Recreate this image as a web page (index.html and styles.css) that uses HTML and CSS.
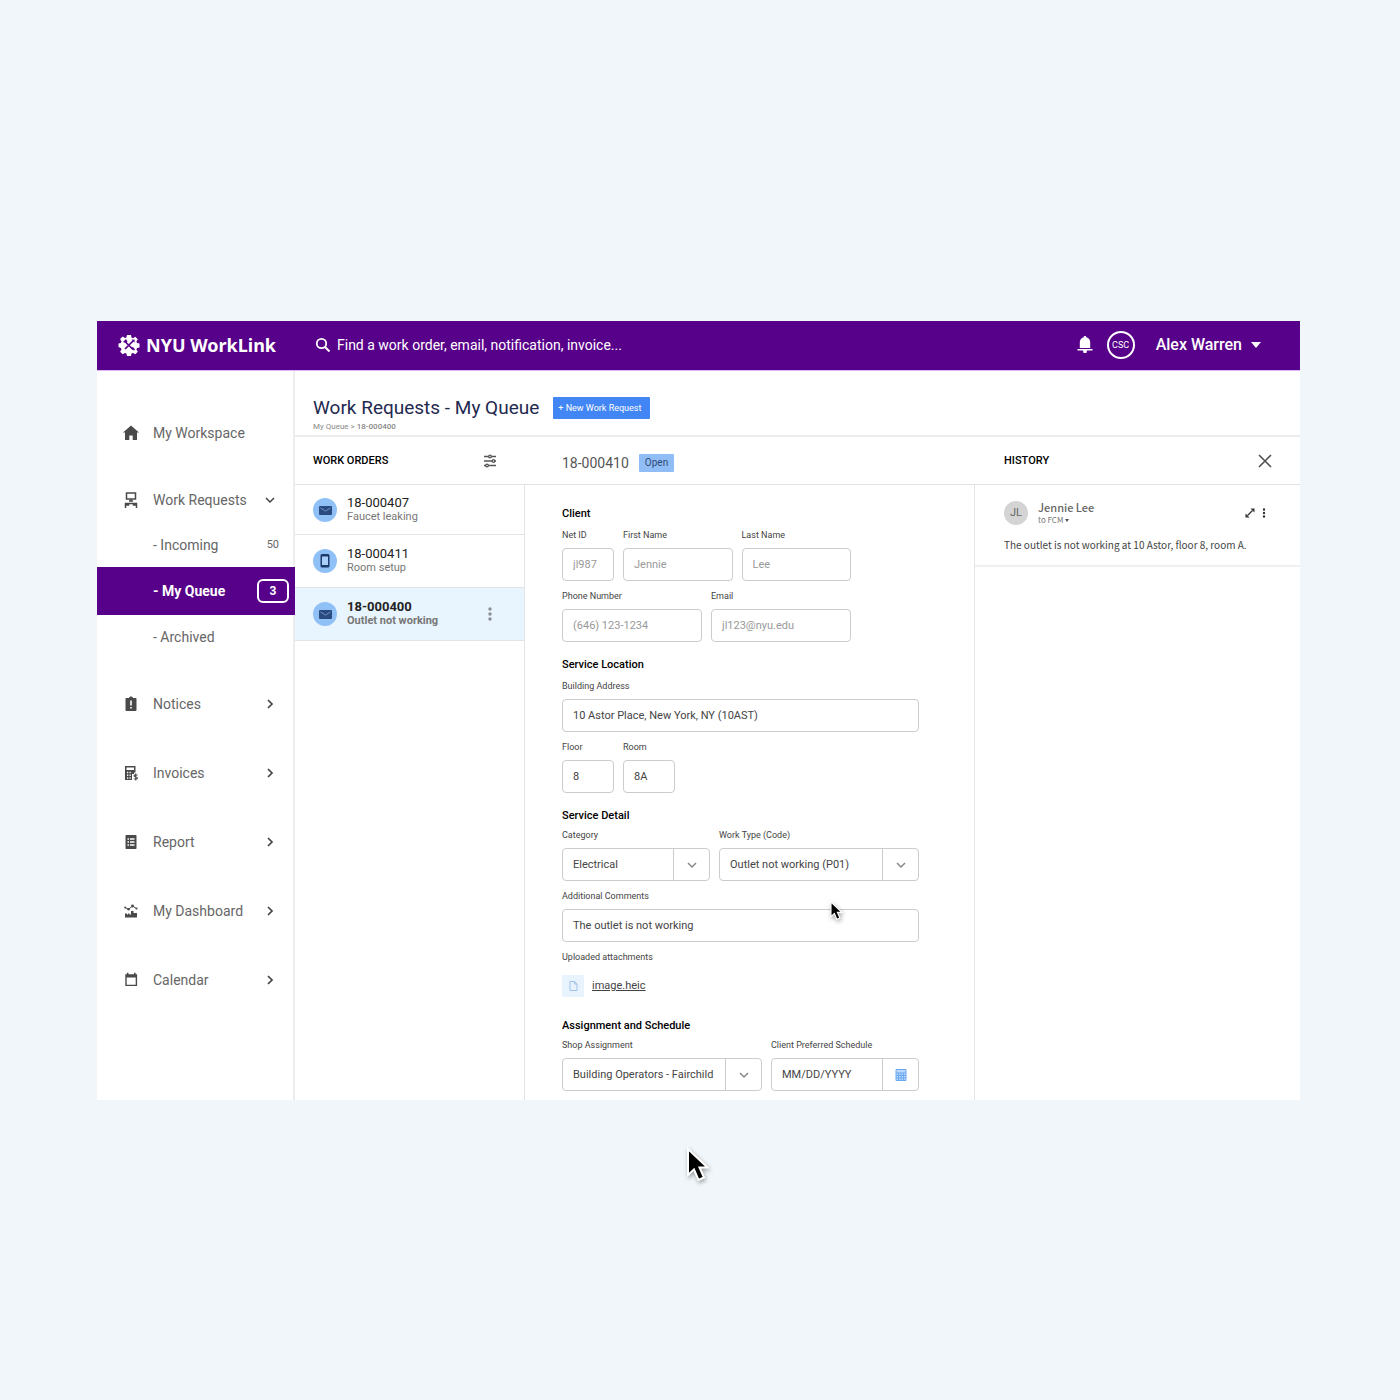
FILE: index.html
```html
<!DOCTYPE html>
<html lang="en">
<head>
<meta charset="utf-8">
<title>NYU WorkLink</title>
<link rel="stylesheet" href="styles.css">
</head>
<body>
<svg class="sprite" aria-hidden="true">
  <symbol id="pointer" viewBox="0 0 24 36">
    <path d="M3 2v26l6-5.500 4.500 10.500 5.500-2.500-4.500-10h8z" fill="#000" stroke="#fff" stroke-width="2"/>
  </symbol>
  <symbol id="right" viewBox="0 0 10 10"><path d="M3 1l4 4-4 4" fill="none" stroke="currentColor" stroke-width="1.700"/></symbol>
  <symbol id="down" viewBox="0 0 10 10"><path d="M1 3l4 4 4-4" fill="none" stroke="currentColor" stroke-width="1.500"/></symbol>
  <symbol id="mail" viewBox="0 0 24 24">
    <circle cx="12" cy="12" r="12" fill="#90c1f6"/>
    <rect x="6" y="8" width="13" height="9" rx="1" fill="#2b4a7f"/>
    <path d="M7.500 10l5 3 5-3" fill="none" stroke="#7ba6dc" stroke-width=".8"/>
  </symbol>
  <symbol id="phone" viewBox="0 0 24 24">
    <circle cx="12" cy="12" r="12" fill="#90c1f6"/>
    <rect x="7.500" y="5" width="9" height="13.500" rx="1.500" fill="#1d3a6d"/>
    <rect x="9" y="7.500" width="6" height="8.500" fill="#a9d0f9"/>
  </symbol>
  <symbol id="dots" viewBox="0 0 4 14"><circle cx="2" cy="2" r="1.700"/><circle cx="2" cy="7" r="1.700"/><circle cx="2" cy="12" r="1.700"/></symbol>
</svg>

<div class="app">
  <header class="topbar">
    <a class="brand" href="#">
      <svg width="22" height="22" viewBox="0 0 22 22">
        <path d="M9 1h4l.5 2.600 1.500.6 2.300-1.500 2.500 2.600-1.400 2.300.6 1.500 2.500.5v3.800l-2.500.6-.6 1.500 1.400 2.300-2.500 2.500-2.300-1.400-1.500.6-.5 2.500H9l-.6-2.500-1.500-.6-2.200 1.400-2.600-2.500 1.400-2.300-.6-1.500L.5 13V9.400l2.400-.5.6-1.500-1.400-2.300 2.600-2.600 2.200 1.500 1.500-.6z" fill="#fff"/>
        <path d="M7 7.500l8 8M15.500 6.500L7 15" stroke="#570089" stroke-width="1.700" fill="none"/>
        <path d="M5 8l3-3 1.500 2.500L8 9zM13.500 13l2 .5 1.500 2-1 1-2-1.500zM13.500 5.500l3 .2.300 3" fill="#570089"/>
      </svg>
      <span>NYU WorkLink</span>
    </a>
    <label class="search">
      <svg width="16" height="16" viewBox="0 0 16 16"><circle cx="6.500" cy="6.500" r="4.700" fill="none" stroke="#fff" stroke-width="1.800"/><path d="M10 10l4.500 4.500" stroke="#fff" stroke-width="2"/></svg>
      <input type="search" aria-label="Search" placeholder="Find a work order, email, notification, invoice...">
    </label>
    <button class="bell" aria-label="Notifications">
      <svg width="16" height="18" viewBox="0 0 16 18" fill="#fff"><path d="M8 0c.8 0 1.300.5 1.300 1.300C12 2 13.200 4 13.200 6.500V12H2.800V6.500C2.800 4 4 2 6.700 1.300 6.700.5 7.200 0 8 0zM.5 13h15v1.600H10L9.500 17h-3L6 14.600H.5z"/></svg>
    </button>
    <span class="role">CSC</span>
    <button class="user">Alex Warren <svg width="10" height="6" viewBox="0 0 10 6"><path d="M0 0h10L5 6z" fill="#fff"/></svg></button>
  </header>

  <div class="body">
    <nav class="sidebar">
      <a class="nav-item" href="#">
        <svg class="icon" viewBox="0 0 16 16"><path d="M8 .5l8 7h-2V15H9.700v-4.500H6.300V15H2V7.500H0z"/></svg>
        <span>My Workspace</span>
      </a>
      <div class="nav-group">
        <a class="nav-item" href="#">
          <svg class="icon" viewBox="0 0 16 16" fill="none" stroke="currentColor" stroke-width="1.500"><path d="M3.500 1h9v6h-9zM8 7v2.500M6 9h4M2.500 16v-4.500h11V16M2.500 13h3v-2M13.500 13h-3v-2"/></svg>
          <span>Work Requests</span>
          <svg class="arrow" viewBox="0 0 10 10"><use href="#down"/></svg>
        </a>
        <a class="nav-sub" href="#"><span>- Incoming</span><span class="count">50</span></a>
        <a class="nav-sub current" href="#"><span>- My Queue</span><span class="pill">3</span></a>
        <a class="nav-sub" href="#"><span>- Archived</span></a>
      </div>
      <a class="nav-item" href="#">
        <svg class="icon" viewBox="0 0 16 16"><path fill-rule="evenodd" d="M3.500 2H6c.3-1 1-1.500 2-1.500s1.700.5 2 1.500h2.500c.7 0 1 .4 1 1v11c0 .7-.3 1-1 1h-9c-.7 0-1-.3-1-1V3c0-.6.300-1 1-1zM7.200 4.500v5h1.600v-5zm0 6.500v1.600h1.600V11z"/></svg>
        <span>Notices</span>
        <svg class="arrow" viewBox="0 0 10 10"><use href="#right"/></svg>
      </a>
      <a class="nav-item" href="#">
        <svg class="icon" viewBox="0 0 16 16"><path fill-rule="evenodd" d="M2 1h10.500v6.500H11V9H9v6H2zM3.500 2.500V5H11V2.500zM4 6.700v1.500h1.300V6.700zm2.500 0v1.500h1.300V6.700zM4 9.500V11h1.300V9.500zm2.500 0V11h1.300V9.500zM4 12.200v1.500h1.300v-1.500zm2.500 0v1.500h1.300v-1.500z"/><path d="M14.500 10.300c-2-1-3.700-.4-3.500.7.200 1.200 3.500.8 3.500 2.100 0 1.200-2.200 1.500-3.700.5M12.700 8.500v7" fill="none" stroke="currentColor" stroke-width="1.100"/></svg>
        <span>Invoices</span>
        <svg class="arrow" viewBox="0 0 10 10"><use href="#right"/></svg>
      </a>
      <a class="nav-item" href="#">
        <svg class="icon" viewBox="0 0 16 16"><path fill-rule="evenodd" d="M3.500 1h9c.7 0 1 .3 1 1v12c0 .7-.3 1-1 1h-9c-.7 0-1-.3-1-1V2c0-.7.300-1 1-1zM4.500 4.200v1.500H6V4.200zm2.500 0v1.500h4.500V4.200zM4.500 7.200v1.500H6V7.200zm2.500 0v1.500h4.500V7.200zM4.500 10.200v1.500H6v-1.500zm2.500 0v1.500h4.500v-1.500z"/></svg>
        <span>Report</span>
        <svg class="arrow" viewBox="0 0 10 10"><use href="#right"/></svg>
      </a>
      <a class="nav-item" href="#">
        <svg class="icon" viewBox="0 0 16 16"><path d="M2 10.500h2v1h1v-1h1.500v1H8V8h2.500v2H14v4.500H2z"/><path d="M2 4.500l3.500 1.800L9.500 3l4 2.500" fill="none" stroke="currentColor" stroke-width="1"/><circle cx="2.200" cy="4.500" r="1"/><circle cx="5.500" cy="6.200" r="1.200"/><circle cx="9.500" cy="3" r="1.400"/><circle cx="13.500" cy="5.500" r="1.100"/></svg>
        <span>My Dashboard</span>
        <svg class="arrow" viewBox="0 0 10 10"><use href="#right"/></svg>
      </a>
      <a class="nav-item" href="#">
        <svg class="icon" viewBox="0 0 16 16"><path fill-rule="evenodd" d="M2.300 2.200h1.500V.8h1.700v1.400h5.500V.8h1.600v1.400h1.500V14H2.300zM3.700 5.500v7.200h9V5.500z"/></svg>
        <span>Calendar</span>
        <svg class="arrow" viewBox="0 0 10 10"><use href="#right"/></svg>
      </a>
    </nav>

    <main class="main">
      <div class="page-head">
        <div class="title-row">
          <h1>Work Requests - My Queue</h1>
          <button class="new-request">+ New Work Request</button>
        </div>
        <p class="crumbs">My Queue &gt; <b>18-000400</b></p>
      </div>

      <div class="columns heads">
        <div class="list-head">
          <h2>WORK ORDERS</h2>
          <button aria-label="Filter">
            <svg width="14" height="14" viewBox="0 0 14 14" fill="#fff" stroke="#555" stroke-width="1.300"><path d="M1 2.500h12M1 7h12M1 11.500h12"/><circle cx="7" cy="2.500" r="1.300"/><circle cx="10.500" cy="7" r="1.300"/><circle cx="4" cy="11.500" r="1.300"/></svg>
          </button>
        </div>
        <div class="order-head"><span class="order-id">18-000410</span><span class="status">Open</span></div>
        <div class="history-head">
          <h2>HISTORY</h2>
          <button aria-label="Close"><svg width="14" height="14" viewBox="0 0 14 14"><path d="M1 1l12 12M13 1L1 13" stroke="#505050" stroke-width="1.600"/></svg></button>
        </div>
      </div>

      <div class="columns panes">
        <div class="orders">
          <a class="order first" href="#">
            <svg width="24" height="24"><use href="#mail"/></svg>
            <span><strong>18-000407</strong><small>Faucet leaking</small></span>
          </a>
          <a class="order" href="#">
            <svg width="24" height="24"><use href="#phone"/></svg>
            <span><strong>18-000411</strong><small>Room setup</small></span>
          </a>
          <a class="order selected" href="#">
            <svg width="24" height="24"><use href="#mail"/></svg>
            <span><strong>18-000400</strong><small>Outlet not working</small></span>
            <svg class="more" width="4" height="14"><use href="#dots"/></svg>
          </a>
        </div>

        <form class="detail">
          <section>
            <h3>Client</h3>
            <div class="row narrow">
              <label class="field tiny">Net ID<input class="muted" value="jl987"></label>
              <label class="field">First Name<input class="muted" value="Jennie"></label>
              <label class="field">Last Name<input class="muted" value="Lee"></label>
            </div>
            <div class="row narrow">
              <label class="field">Phone Number<input class="muted" value="(646) 123-1234"></label>
              <label class="field">Email<input class="muted" value="jl123@nyu.edu"></label>
            </div>
          </section>
          <section>
            <h3>Service Location</h3>
            <div class="row"><label class="field">Building Address<input value="10 Astor Place, New York, NY (10AST)"></label></div>
            <div class="row">
              <label class="field tiny">Floor<input value="8"></label>
              <label class="field tiny">Room<input value="8A"></label>
            </div>
          </section>
          <section class="tight">
            <h3>Service Detail</h3>
            <div class="row">
              <label class="field">Category
                <span class="combo"><select><option>Electrical</option></select><span class="cap"><svg width="10" height="10"><use href="#down"/></svg></span></span>
              </label>
              <label class="field wide">Work Type (Code)
                <span class="combo"><select><option>Outlet not working (P01)</option></select><span class="cap"><svg width="10" height="10"><use href="#down"/></svg></span></span>
              </label>
            </div>
            <div class="row"><label class="field">Additional Comments<input value="The outlet is not working"></label></div>
            <div class="attachments">
              <p>Uploaded attachments</p>
              <a href="#">
                <svg width="22" height="22" viewBox="0 0 22 22"><rect width="22" height="22" rx="1" fill="#e8f3fe"/><path d="M8 6.500h4.500l2.500 2.500v6.500H8zM12.500 6.500V9H15" fill="none" stroke="#9fc3ea"/></svg>
                <span>image.heic</span>
              </a>
            </div>
          </section>
          <section class="tight">
            <h3>Assignment and Schedule</h3>
            <div class="row">
              <label class="field wide">Shop Assignment
                <span class="combo"><select><option>Building Operators - Fairchild</option></select><span class="cap"><svg width="10" height="10"><use href="#down"/></svg></span></span>
              </label>
              <label class="field">Client Preferred Schedule
                <span class="combo"><input value="MM/DD/YYYY"><span class="cap"><svg width="12" height="12" viewBox="0 0 12 12"><path d="M1 .5h10v11H1z" fill="#b9d8fb"/><path d="M1 .5h10v11H1zM1 4h10M1 6.500h10M1 9h10M3.500 4v7.500M6 4v7.500M8.500 4v7.500" fill="none" stroke="#6ba8f0"/></svg></span></span>
              </label>
            </div>
          </section>
          <svg class="pointer small" viewBox="0 0 24 36"><use href="#pointer"/></svg>
        </form>

        <div class="history">
          <article class="message">
            <div class="from">
              <span class="avatar">JL</span>
              <div class="who"><strong>Jennie Lee</strong><span>to FCM <svg width="4" height="3" viewBox="0 0 4 3"><path d="M0 0h4L2 3z" fill="#555"/></svg></span></div>
              <button aria-label="Expand"><svg width="10" height="10" viewBox="0 0 10 10"><path d="M2.500 7.500l5-5" stroke="#333" stroke-width="1.300"/><path d="M5.500.5h4v4zM.5 5.500v4h4z" fill="#333"/></svg></button>
              <button class="dots" aria-label="More"><svg width="4" height="10" viewBox="0 0 4 14"><use href="#dots"/></svg></button>
            </div>
            <p>The outlet is not working at 10 Astor, floor 8, room A.</p>
          </article>
        </div>
      </div>
    </main>
  </div>
</div>
<svg class="pointer" viewBox="0 0 24 36"><use href="#pointer"/></svg>
</body>
</html>
```
FILE: styles.css
```css
* { box-sizing: border-box; }

body {
  position: relative;
  margin: 0;
  min-height: 100vh;
  padding: 321px 100px 100px 97px;
  background: #f0f6fa;
  color: #444;
  font-family: Roboto, "Liberation Sans", sans-serif;
  font-size: 11px;
}

h1, h2, h3, p { margin: 0; }
a { color: inherit; text-decoration: none; }
button { display: flex; align-items: center; padding: 0; border: 0; background: none; font: inherit; color: inherit; }
input, select { min-width: 0; font: inherit; color: inherit; outline: 0; }
svg { flex: none; display: block; }
.sprite { position: absolute; width: 0; height: 0; }

.app { background: #fff; }

/* Top bar */
.topbar {
  display: flex;
  align-items: center;
  height: 50px;
  padding: 0 39px 2px 21px;
  background: #570089;
  border-bottom: 1px solid #dfb8f8;
  color: #fff;
}
.brand {
  display: flex;
  align-items: center;
  gap: 6px;
  width: 197px;
  font: 700 18px "Noto Sans", "Open Sans", sans-serif;
  white-space: nowrap;
}
.search { flex: 1; display: flex; align-items: center; gap: 6px; }
.search input { flex: 1; padding: 0; border: 0; background: none; font-size: 14px; appearance: none; }
.search input::placeholder { color: #fff; opacity: 1; }
.role {
  display: grid;
  place-items: center;
  width: 28px;
  height: 28px;
  margin: 0 21px 0 14px;
  border: 2px solid #fff;
  border-radius: 50%;
  font-size: 9px;
}
.user { gap: 9px; font-size: 16px; font-weight: 500; }

/* Sidebar */
.body { display: grid; grid-template-columns: 198px minmax(0, 1fr); }
.sidebar {
  display: flex;
  flex-direction: column;
  gap: 21px;
  padding: 38px 0 0;
  border-right: 2px solid #ededed;
  color: #666;
  font-size: 14px;
}
.nav-item { display: flex; align-items: center; height: 48px; padding: 0 18px 0 26px; }
.nav-item span { flex: 1; }
.nav-group .nav-item { height: 44px; }
.icon { width: 16px; height: 16px; margin-right: 14px; color: #4a4a4a; fill: currentColor; }
.nav-group .icon { fill: none; }
.arrow { width: 10px; height: 10px; color: #444; }
.nav-sub { display: flex; align-items: center; justify-content: space-between; height: 45px; padding: 0 14px 0 56px; }
.nav-sub:last-child { height: 44px; }
.nav-sub.current { height: 48px; margin-right: -2px; padding-right: 6px; background: #570089; color: #fff; font-weight: 700; }
.count { font-size: 11px; }
.pill {
  width: 32px;
  border: 2px solid #fff;
  border-radius: 6px;
  font-size: 12px;
  line-height: 20px;
  text-align: center;
}

/* Page heading */
.page-head { height: 66px; padding: 24px 18px 0; border-bottom: 2px solid #ececec; }
.title-row { display: flex; align-items: center; gap: 14px; }
h1 { color: #1f2a50; font-size: 19px; font-weight: 400; line-height: 26px; }
.new-request { height: 22px; padding: 0 9px 0 5px; border-radius: 1px; background: #4285f4; color: #fff; font-size: 9px; }
.crumbs { color: #888; font-size: 8px; line-height: 12px; }
.crumbs b { font-weight: 500; }

/* Three panes */
.columns { display: grid; grid-template-columns: 230px 450px minmax(0, 1fr); }
.heads { height: 48px; border-bottom: 1px solid #e2e2e2; }
.heads > div { display: flex; align-items: center; }
h2 { flex: 1; color: #000; font-size: 11px; font-weight: 500; }
.list-head { padding: 0 28px 0 18px; }
.order-head { gap: 10px; padding: 5px 0 0 37px; }
.order-id { color: #555; font-size: 14px; }
.status { padding: 0 6px; border-radius: 1px; background: #90bdf5; color: #2f4a78; font-size: 10px; line-height: 18px; }
.history-head { padding: 0 28px 0 29px; }

.orders { border-right: 1px solid #e4e4e4; }
.order { display: flex; align-items: center; gap: 10px; height: 53px; padding: 0 32px 0 18px; border-bottom: 1px solid #e4e4e4; }
.order.first { height: 50px; }
.order > span { flex: 1; }
.order strong, .order small { display: block; font-size: 13px; font-weight: 400; line-height: 14px; }
.order strong { color: #222; }
.order small { color: #777; font-size: 11px; }
.order.selected { background: #e8f4fe; }
.order.selected strong, .order.selected small { font-weight: 700; }
.more { fill: #8a8f96; }

.detail { position: relative; padding: 21px 55px 9px 37px; border-right: 1px solid #e4e4e4; }
.detail section + section { margin-top: 15px; }
h3 { margin-bottom: 6px; color: #000; font-size: 11px; font-weight: 500; line-height: 16px; }
.tight h3 { margin-bottom: 4px; }
.row { display: flex; gap: 9px; }
.row + .row { margin-top: 8px; }
.narrow { padding-right: 68px; }
.field { flex: 1; min-width: 0; font-size: 9px; line-height: 14px; }
.field.tiny { flex: none; width: 52px; }
.field.wide { flex: none; width: 200px; }
.field > input, .combo {
  width: 100%;
  height: 33px;
  margin-top: 6px;
  border: 1px solid #ccc;
  border-radius: 4px;
  background: #fff;
  font-size: 11px;
}
.field > input { display: block; padding: 0 10px; }
.field > input.muted { color: #999; }
.combo { display: flex; }
.combo select, .combo input { flex: 1; padding: 0 0 0 10px; border: 0; background: none; appearance: none; }
.cap { display: grid; place-items: center; width: 36px; border-left: 1px solid #ccc; color: #888; }
.attachments { padding: 8px 0 6px; font-size: 9px; line-height: 14px; }
.attachments a { display: flex; align-items: center; gap: 8px; margin-top: 11px; font-size: 11px; text-decoration: underline; }

.message {
  padding: 15px 34px 12px 29px;
  border-bottom: 2px solid #f0f0f0;
  font-family: "Noto Sans CJK SC", "Liberation Sans", sans-serif;
  font-size: 10px;
  line-height: 16px;
}
.from { display: flex; align-items: center; margin-bottom: 11px; }
.avatar { width: 24px; margin-right: 10px; border-radius: 50%; background: #d4d4d4; color: #666; font: 11px/24px Roboto, sans-serif; text-align: center; }
.who { flex: 1; }
.who strong { display: block; color: #666; font-size: 11px; font-weight: 500; line-height: 14px; }
.who span { display: flex; align-items: center; gap: 2px; color: #777; font-size: 8px; line-height: 12px; }
.dots { margin-left: 7px; fill: #333; }

/* Pointers lie over the page */
.pointer { position: absolute; left: 685px; top: 1147px; width: 24px; height: 36px; filter: drop-shadow(1px 2px 2px rgba(0, 0, 0, .35)); }
.pointer.small { left: 304px; top: 416px; width: 14px; height: 20px; }
```
